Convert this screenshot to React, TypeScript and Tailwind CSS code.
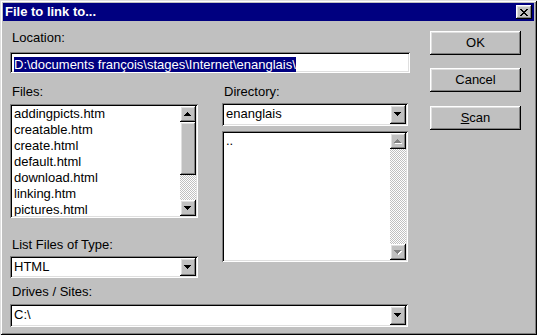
import React from "react";

const raised =
  "shadow-[inset_-1px_-1px_#000,inset_1px_1px_#fff,inset_-2px_-2px_#808080,inset_2px_2px_#dfdfdf]";
const sunken =
  "shadow-[inset_1px_1px_#808080,inset_-1px_-1px_#fff,inset_2px_2px_#000,inset_-2px_-2px_#dfdfdf]";
const checker =
  "bg-[image:repeating-conic-gradient(#c0c0c0_0_25%,#ffffff_0_50%)] bg-size-[2px_2px]";

const Arrow = ({ up = false, disabled = false }: { up?: boolean; disabled?: boolean }) => {
  const d = up
    ? "M3 0h1v1h-1zM2 1h3v1h-3zM1 2h5v1h-5zM0 3h7v1h-7z"
    : "M0 0h7v1h-7zM1 1h5v1h-5zM2 2h3v1h-3zM3 3h1v1h-1z";
  return (
    <svg width="8" height="5" viewBox="0 0 8 5" shapeRendering="crispEdges">
      {disabled && <path d={d} fill="#fff" transform="translate(1 1)" />}
      <path d={d} fill={disabled ? "#808080" : "#000"} />
    </svg>
  );
};

const ArrowButton = ({ up = false, disabled = false }: { up?: boolean; disabled?: boolean }) => (
  <div className={`w-[16px] h-[16px] bg-[#c0c0c0] flex items-center justify-center ${raised}`}>
    <Arrow up={up} disabled={disabled} />
  </div>
);

const Label = ({ children }: { children: React.ReactNode }) => (
  <div className="h-[16px] leading-[16px] pl-[2px] text-black">{children}</div>
);

const Combo = ({ value, className = "" }: { value: string; className?: string }) => (
  <div className={`bg-white p-[2px] flex ${sunken} ${className}`}>
    <div className="flex-1 pl-[2px] leading-[18px] overflow-hidden whitespace-nowrap">{value}</div>
    <div className={`w-[16px] bg-[#c0c0c0] flex items-center justify-center ${raised}`}>
      <Arrow />
    </div>
  </div>
);

const Button = ({ children, className = "" }: { children: React.ReactNode; className?: string }) => (
  <div
    className={`w-[91px] h-[24px] bg-[#c0c0c0] flex items-center justify-center text-black ${raised} ${className}`}
  >
    {children}
  </div>
);

const files = [
  "addingpicts.htm",
  "creatable.htm",
  "create.html",
  "default.html",
  "download.html",
  "linking.htm",
  "pictures.html",
];

export default function App() {
  return (
    <div
      className="w-[537px] h-[335px] bg-[#c0c0c0] p-[3px] text-[13px] overflow-hidden shadow-[inset_1px_1px_#dfdfdf,inset_-1px_-1px_#000,inset_2px_2px_#fff,inset_-2px_-2px_#808080]"
      style={{ fontFamily: '"Liberation Sans", Arial, sans-serif' }}
    >
      {/* title bar */}
      <div className="h-[18px] bg-[#000080] flex items-center justify-between pl-[2px] pr-[2px]">
        <span className="text-white font-bold leading-[18px]">File to link to...</span>
        <div className={`w-[16px] h-[14px] bg-[#c0c0c0] flex items-center justify-center ${raised}`}>
          <svg width="8" height="7" viewBox="0 0 8 7" shapeRendering="crispEdges">
            <path
              d="M0 0h2v1h-2zM6 0h2v1h-2zM1 1h2v1h-2zM5 1h2v1h-2zM2 2h4v1h-4zM3 3h2v1h-2zM2 4h4v1h-4zM1 5h2v1h-2zM5 5h2v1h-2zM0 6h2v1h-2zM6 6h2v1h-2z"
              fill="#000"
            />
          </svg>
        </div>
      </div>

      <div className="flex pl-[7px]">
        {/* left area */}
        <div className="w-[400px] flex flex-col">
          <div className="mt-[9px]">
            <Label>Location:</Label>
          </div>
          <div className={`mt-[6px] h-[21px] bg-white p-[2px] ${sunken}`}>
            <div className="pl-[2px] pt-[1px]">
              <span className="bg-[#000080] text-white leading-[15px] inline-block whitespace-nowrap">
                D:\documents françois\stages\Internet\enanglais\
              </span>
            </div>
          </div>

          <div className="flex mt-[11px]">
            {/* files column */}
            <div className="w-[188px] flex flex-col">
              <Label>Files:</Label>
              <div className={`mt-[4px] h-[114px] bg-white p-[2px] flex ${sunken}`}>
                <div className="flex-1 overflow-hidden">
                  {files.map((f) => (
                    <div key={f} className="h-[16px] leading-[16px] pl-[2px] whitespace-nowrap">
                      {f}
                    </div>
                  ))}
                </div>
                <div className="w-[16px] flex flex-col">
                  <ArrowButton up />
                  <div className={`h-[53px] bg-[#c0c0c0] ${raised}`} />
                  <div className={`flex-1 ${checker}`} />
                  <ArrowButton />
                </div>
              </div>
              <div className="mt-[19px]">
                <Label>List Files of Type:</Label>
              </div>
              <Combo value="HTML" className="mt-[3px] h-[22px]" />
            </div>

            {/* directory column */}
            <div className="w-[186px] ml-[24px] flex flex-col">
              <Label>Directory:</Label>
              <Combo value="enanglais" className="mt-[3px] h-[23px]" />
              <div className={`mt-[5px] h-[131px] bg-white p-[2px] flex ${sunken}`}>
                <div className="flex-1 overflow-hidden">
                  <div className="h-[16px] leading-[16px] pl-[2px]">..</div>
                </div>
                <div className="w-[16px] flex flex-col">
                  <ArrowButton up disabled />
                  <div className={`flex-1 ${checker}`} />
                  <ArrowButton disabled />
                </div>
              </div>
            </div>
          </div>

          <div className="mt-[6px]">
            <Label>Drives / Sites:</Label>
          </div>
          <Combo value="C:\" className="mt-[4px] h-[23px] w-[398px]" />
        </div>

        {/* buttons */}
        <div className="ml-[20px] flex flex-col">
          <Button className="mt-[10px]">OK</Button>
          <Button className="mt-[13px]">Cancel</Button>
          <Button className="mt-[14px]">
            <span>
              <span className="underline">S</span>can
            </span>
          </Button>
        </div>
      </div>
    </div>
  );
}
